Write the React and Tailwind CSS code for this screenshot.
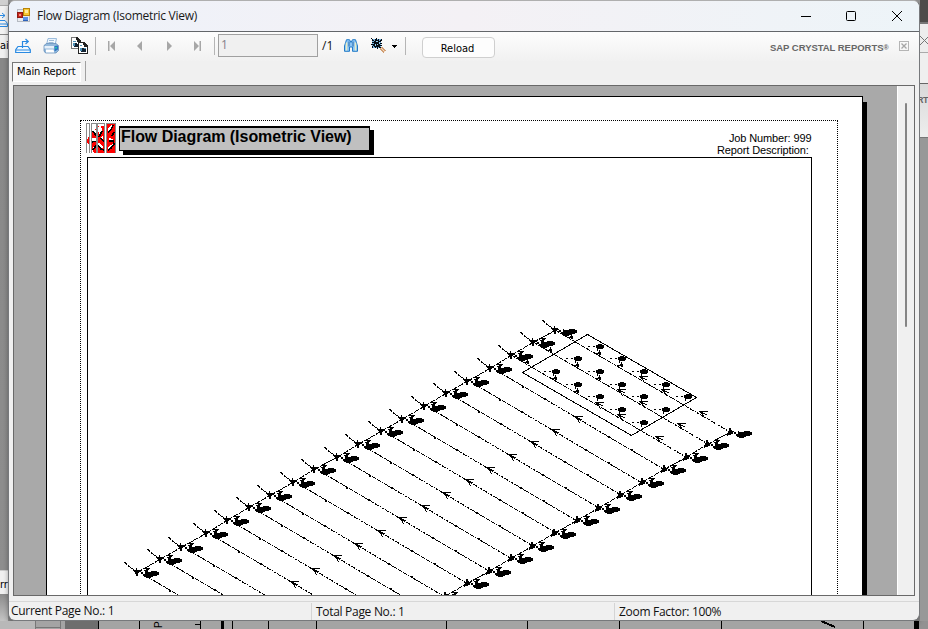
import React from "react";

const upper = [
  [555, 330], [533, 342], [511, 355], [490, 368], [467, 381], [446, 393], [424, 406],
  [402, 419], [381, 431], [358, 444], [337, 457], [314, 469], [293, 482], [270, 495],
  [249, 507], [227, 520], [206, 533], [181, 547], [160, 559], [137, 572],
];
const lower = [
  [730, 432], [707, 444], [686, 457], [664, 469], [642, 482], [620, 495], [598, 508],
  [577, 520], [554, 533], [532, 546], [511, 558], [489, 571], [467, 583], [445, 596],
];
const drops = [
  [571, 338], [599, 354], [621, 366], [550, 351], [577, 366], [599, 379], [527, 363],
  [555, 379], [577, 392],
];
const returns = [
  [640, 377], [662, 390], [700, 412], [618, 390], [640, 402], [678, 424], [596, 403],
  [618, 415], [656, 437],
];
const pods = [
  [600, 347], [578, 359], [622, 359], [556, 372], [600, 372], [644, 372], [578, 385],
  [622, 385], [666, 385], [600, 397], [644, 397], [688, 397], [622, 410], [666, 410],
  [644, 423],
];

function Blob({ x, y }) {
  return (
    <path
      d={`M${x + 9} ${y - 1}h5v-1h6v1h2v3h-2v1h-4v1h-2v1h-5v-1h-2v-1h-1v-2h3z`}
      fill="#000"
      stroke="none"
    />
  );
}

function UpLeftArrow({ x, y }) {
  return (
    <path
      d={`M${x - 1} ${y - 1}h9v1h-5v1h2v1h2v1h-2v-1h-2v1h1v2h1v1h-1v-1h-1v-2h-1v-1h-1v-1h-1v-1h-1z`}
      fill="#000"
      stroke="none"
    />
  );
}

function Node({ p, next, lead, up }) {
  const [x, y] = p;
  return (
    <g>
      {lead && <path d={`M${x - 12} ${y - 8.5}L${x} ${y}`} strokeDasharray="3 1" />}
      {lead && <path d={`M${x - 13} ${y - 10}h2v1h1v1h-2v-1h-1z`} fill="#000" stroke="none" />}
      {up ? (
        <path d={`M${x - 1} ${y - 4}h2v2h1v2h1v2h-2v1h-3v1h-1v-3h1v-2h1z`} fill="#000" stroke="none" />
      ) : (
        <path d={`M${x - 4} ${y - 2}h3v-2h1v2h3v1h-1v2h-1v3h-2v-2h-1v-2h-1v-1h-1z`} fill="#000" stroke="none" />
      )}
      <path d={`M${x + 2} ${y - 0.5}h2m0 1h2m-2 1h2m0 1h3M${x + 8.5} ${y - 1}v3`} />
      {next && (
        <>
          <path d={`M${x} ${y + 0.5}L${next[0]} ${next[1] + 0.5}`} strokeDasharray="6 1" />
          <path d={`M${x + 7} ${y - 4}h6v1h-1v1h-1v2h-1v1h-1v-2h-2v-1h2v-1h-2z`} fill="#000" stroke="none" />
        </>
      )}
      <Blob x={x} y={y + 1} />
    </g>
  );
}

function Diagram() {
  return (
    <svg
      className="block h-full w-full"
      viewBox="88 158 723 437"
      preserveAspectRatio="xMinYMin slice"
      shapeRendering="crispEdges"
      fill="none"
      stroke="#000"
      strokeWidth="1"
    >
      {upper.map(([x, y], i) => {
        const short = i < 3;
        return (
          <g key={i}>
            <path
              d={short ? `M${x} ${y}L${x + 175} ${y + 102}` : `M${x + 9} ${y + 4}L${x + 175} ${y + 102}`}
              strokeDasharray="5 1 1 1 3 1"
            />
            {!short && (
              <>
                <UpLeftArrow x={x + 85} y={y + 49} />
                {[32, 54, 118, 141].map((d) => (
                  <path key={d} d={`M${x + d} ${Math.round(y + d * 0.583)}h2`} strokeWidth="2" />
                ))}
              </>
            )}
          </g>
        );
      })}
      {upper.map((p, i) => (
        <Node key={i} p={p} next={upper[i - 1]} lead />
      ))}
      {lower.map((p, i) => (
        <Node key={i} p={p} next={lower[i - 1]} up />
      ))}
      <path d="M587.5 334.5L696.500 397.5L631.500 435.500L522.5 372.500Z" />
      {drops.map(([x, y], i) => (
        <path
          key={i}
          d={`M${x - 4} ${y - 1}h3v-1h1v-2h1v2h1v3h-2v-1h-4z`}
          fill="#000"
          stroke="none"
        />
      ))}
      {returns.map(([x, y], i) => (
        <UpLeftArrow key={i} x={x} y={y} />
      ))}
      {pods.map(([x, y], i) => (
        <g key={i}>
          <path d={`M${x - 12} ${y - 0.5}h2m3 0h2M${x - 2.5} ${y}v4`} />
          <path
            d={`M${x - 2} ${y - 3}h4v1h2v3h-1v1h-6v-1h-1v-3h2z`}
            fill="#000"
            stroke="none"
          />
        </g>
      ))}
    </svg>
  );
}

function AppIcon() {
  return (
    <svg className="h-4 w-4 shrink-0" viewBox="0 0 16 16" shapeRendering="crispEdges">
      <path d="M1.500 1.500h12v12h-12z" fill="#e9ebef" stroke="#b5bac2" />
      <path d="M1.500 4.500h5v5h-5z" fill="#c8241b" stroke="#8d1a14" />
      <path d="M3 6h2v2H3z" fill="#ef8d80" />
      <path d="M7.500.5h6v7h-6z" fill="#f7c935" stroke="#b98308" />
      <path d="M9 2h3v3H9z" fill="#ffeaa0" />
      <path d="M7 9h5v4H7z" fill="#5b92e8" />
      <path d="M7 12h5v1H7z" fill="#2c62bb" />
    </svg>
  );
}

function ExportIcon() {
  return (
    <svg className="h-4 w-4 shrink-0" viewBox="0 0 16 16" fill="none" stroke="#2a8ae2" strokeWidth="1.2">
      <path d="M3 8.500h10l2.300 3.200v2.800H.700v-2.800z" fill="#f1f9ff" />
      <path d="M1 12h14" />
      <path d="M7.500 10V3.500h5.500M10.500 1l2.800 2.500l-2.800 2.500" />
    </svg>
  );
}

function PrintIcon() {
  return (
    <svg className="h-4 w-4 shrink-0" viewBox="0 0 16 16">
      <path d="M5 .600h8.500L12 7H3.500z" fill="#f4faff" stroke="#7aa5cf" strokeWidth=".8" />
      <path d="M6 2.500h5M5.500 4.500h5" stroke="#86a9ca" strokeWidth=".8" />
      <path d="M1 7.500l2.500-2h9.500l2.500 2v5L13 15H2.500L1 13z" fill="#94b9db" stroke="#5785b4" strokeWidth=".7" />
      <path d="M1.500 8h9.500v2.500H1.500z" fill="#e6f0fa" />
      <path d="M11.500 8l3.500-.5v4l-3.500 2z" fill="#2c75c4" />
      <path d="M3 11.500h7.500l.8 3H3z" fill="#fff" />
      <path d="M12 9h2v1.500h-2z" fill="#28c6a9" />
    </svg>
  );
}

function CopyIcon() {
  return (
    <svg className="h-[17px] w-[17px] shrink-0" viewBox="0 0 17 17" shapeRendering="crispEdges">
      <path d="M.5.5h6l3 3v8h-9z" fill="#fff" stroke="#777" />
      <path d="M5 0h2v1h1v1h1v1h1v2H6V3H5z" fill="#222" />
      <path d="M2 4h3v1H2zM2 6h2v3H2z" fill="#4d91b7" />
      <path d="M4 6h2v1h2v3H3V9h1z" fill="#123" />
      <path d="M7.500 5.500h6l3 3v8h-9z" fill="#fff" stroke="#222" />
      <path d="M12 5h2v1h1v1h1v1h1v2h-4V8h-1z" fill="#222" />
      <path d="M9 8h2v1H9zM9 11h6v3H9z" fill="#4d91b7" />
      <path d="M11 11h2v1h2v3h-5v-1h1z" fill="#123" />
    </svg>
  );
}

function Nav({ d }) {
  return (
    <svg className="h-[10px] w-2 shrink-0" viewBox="0 0 8 10" fill="#a7a7a7">
      <path d={d} />
    </svg>
  );
}

function Binoculars() {
  return (
    <svg className="h-[13px] w-[14px] shrink-0" viewBox="0 0 14 13">
      <path d="M2.500.7h3L7 3.500L8.500.7h3L13.500 7v5.300H8.500V8h-3v4.300H.500V7z" fill="#8ac4f6" stroke="#237cc8" />
      <path d="M2.500 3.500v8M11.500 3.500v8" stroke="#e9edc3" strokeWidth="1.5" />
      <path d="M5 2.500v5M9 2.500v5" stroke="#2469aa" />
    </svg>
  );
}

function ZoomIcon() {
  return (
    <svg className="h-[15px] w-[15px] shrink-0" viewBox="0 0 15 15" shapeRendering="crispEdges">
      <path d="M1 1h9v9H1z" fill="#75b7e4" />
      <path d="M0 0h1v1h1v1h1v1h1V1h1V0h1v2h1V1h1v2h1V2h1V1h1v2h-1v1h-1v1h2v1H9v1h2v1H9v1h1v1H8V9H7v2H6V9H5v1H4V9H3V8H2v2H1V8h1V7H0V6h3V5H1V4h2V3H1V1H0z" fill="#050c15" />
      <path d="M5 3h2v1H5zM4 6h1v2H4zM8 4h1v2H8zM6 6h1v1H6z" fill="#92d1f2" />
      <path d="M10 10l4 4" stroke="#cf9d74" strokeWidth="3" />
      <path d="M10 10l4 4" stroke="#f8d9b8" strokeWidth="1" />
    </svg>
  );
}

function Logo() {
  return (
    <svg className="h-[30px] w-[30px] shrink-0" viewBox="0 0 30 30" shapeRendering="crispEdges">
      <path d="M0 0h30v30H0z" fill="#fff" />
      <path d="M2 14h1v7H2v-1H1v-4h1zM6 8l5-3v25H8l-2-4zM12 3h6v27h-6zM21 1h8v29h-8z" fill="#f00" />
      <path d="M6 6l3-3 1 7 1 4-4-4zM6 15h5v3l-5 1zM7 24l3-3 1 2-3 4zM12 4l3-2 1 6-3 6zM17 12v7l-2-4zM13 19l4 5-2 2-3-4z" fill="#fff" />
      <path d="M22 5l4-3v4l-4 3zM23 15l4 1v3l-4-1zM22 24l5-3v3l-4 3z" fill="#fff" />
      <path d="M7 8l4 6M6 19l5-1M7 27l4-6M13 14l3-6M15 15l3 4M12 22l3 4 3 1M22 9l4-3M27 2l-1 3M23 18h4l1 3-3 4-3 2M28 9l-2 4" fill="none" stroke="#000" strokeWidth="1.500" />
      <path d="M.5 30V.5h3V30M5.500 30V.5h5V30M11.500 30V.5h7V30M20.500 30V.5h9V30" fill="none" stroke="#8a8a8a" />
      <path d="M4 0h1v30H4zM19 0h1v30h-1z" fill="#fff" />
    </svg>
  );
}

function Divider() {
  return <div className="h-[18px] w-px shrink-0 bg-[#b5b5b5]" />;
}

function TitleBar() {
  return (
    <header className="flex h-[31px] shrink-0 items-center border-b border-[#63666a] bg-gradient-to-r from-[#edf2fa] via-[#f4f1f5] to-[#edf4f8] pl-[7px]">
      <AppIcon />
      <h1 className="ml-[5px] w-[180px] whitespace-nowrap font-['Open_Sans',sans-serif] text-[12px] tracking-[-0.280px] text-[#191919]">
        Flow Diagram (Isometric View)
      </h1>
      <svg className="ml-auto mr-[15px] h-3 w-[104px] shrink-0" viewBox="0 0 104 12" fill="none" stroke="#000">
        <path d="M1 6.500h10" />
        <rect x="46.500" y="1.500" width="9" height="9" rx="1" />
        <path d="M92 1l10 10M102 1l-10 10" />
      </svg>
    </header>
  );
}

function Toolbar() {
  return (
    <div className="flex h-[29px] shrink-0 items-center bg-gradient-to-b from-[#fdfdfd] to-[#f1f1f1] pb-[2px] pl-[6px] font-['DejaVu_Sans_Condensed','DejaVu_Sans',sans-serif] text-[11px]">
      <ExportIcon />
      <div className="ml-3"><PrintIcon /></div>
      <div className="ml-3"><CopyIcon /></div>
      <div className="ml-[7px]"><Divider /></div>
      <div className="ml-[12px]"><Nav d="M0 0h1.500v10H0zM7 0v10L2 5z" /></div>
      <div className="ml-[20px]"><Nav d="M6 0v10L1 5z" /></div>
      <div className="ml-[21px]"><Nav d="M2 0v10l5-5z" /></div>
      <div className="ml-[21px]"><Nav d="M0 0v10l5-5zM5.500 0h1.500v10H5.500z" /></div>
      <div className="ml-[12px]"><Divider /></div>
      <div className="ml-[3px] h-[23px] w-[100px] shrink-0 border border-[#a0a0a0] bg-[#f0f0f0] pl-[2px] font-['Open_Sans',sans-serif] text-[12px] leading-[20px] text-[#85808b]">1</div>
      <span className="ml-[4px] w-[22px] shrink-0 pt-px font-['Open_Sans',sans-serif] text-[12px] text-[#111]">/1</span>
      <Binoculars />
      <div className="ml-[13px]"><ZoomIcon /></div>
      <svg className="ml-[6px] mt-[2px] h-[3px] w-[5px] shrink-0" viewBox="0 0 5 3" shapeRendering="crispEdges"><path d="M0 0h5L2.500 3z" /></svg>
      <div className="ml-[8px]"><Divider /></div>
      <button className="ml-[16px] mt-[4px] h-[21px] w-[73px] shrink-0 rounded-[4px] border border-[#cfcfcf] bg-[#fdfdfd] pr-[2px] pt-[2px] text-[11px] leading-none text-black">Reload</button>
      <span className="ml-auto w-[118px] shrink-0 whitespace-nowrap pt-[5px] font-['Liberation_Sans',Arial,sans-serif] text-[9.500px] font-bold tracking-[-0.040px] text-[#666]">
        SAP CRYSTAL REPORTS<span className="text-[7px] align-[1px]">®</span>
      </span>
      <svg className="ml-[11px] mr-[10px] h-[10px] w-[10px] shrink-0" viewBox="0 0 10 10" fill="none" stroke="#b5b5b5">
        <rect x=".5" y=".5" width="9" height="9" />
        <path d="M2.500 2.500l5 5M7.500 2.500l-5 5" stroke="#a5a5a5" strokeWidth="1.300" />
      </svg>
    </div>
  );
}

function Viewer() {
  return (
    <main className="mx-1 flex h-[511px] shrink-0 overflow-hidden border border-[#696969] bg-[#a9a9a9]">
      <div className="flex w-[883px] shrink-0 pl-8 pt-[10px]">
        <section className="h-[520px] w-[817px] shrink-0 border border-black bg-white pl-[33px] pt-[23px]">
          <div className="h-[520px] w-[758px] border border-dotted border-black pl-[6px] pt-[2px]">
            <div className="flex h-[34px] w-[725px] items-start">
              <div className="-ml-px"><Logo /></div>
              <h2 className="ml-[3px] mt-[3px] h-[25px] w-[251px] whitespace-nowrap border border-t-2 border-black bg-[#c0c0c0] pl-px font-['Liberation_Sans',Arial,sans-serif] text-[16px] font-bold leading-[18px] tracking-[-0.040px] shadow-[4px_4px_0_#000]">
                Flow Diagram (Isometric View)
              </h2>
              <div className="ml-auto w-[95px] whitespace-nowrap pt-[9px] font-['Liberation_Sans',Arial,sans-serif] text-[11px] leading-[12px] tracking-[-0.130px] text-black">
                <p className="pl-[12px]">Job Number: 999</p>
                <p>Report Description:</p>
              </div>
            </div>
            <div className="h-[520px] w-[725px] border border-black">
              <div className="h-[437px] w-[723px] overflow-hidden">
                <Diagram />
              </div>
            </div>
          </div>
        </section>
        <div className="mt-[6px] h-[520px] w-1 shrink-0 bg-black" />
      </div>
      <div className="flex grow justify-center border-l border-white bg-[#f0f0f0] pt-[17px]">
        <div className="h-[224px] w-[2px] rounded bg-[#858585]" />
      </div>
    </main>
  );
}

function StatusBar() {
  return (
    <footer className="mt-[5px] flex h-[19px] shrink-0 items-center whitespace-nowrap border-t border-[#d7d7d7] font-['Open_Sans',sans-serif] text-[12px] tracking-[-0.300px] text-[#111]">
      <span className="w-[302px] pl-[2px]">Current Page No.: 1</span>
      <span className="h-[17px] w-[303px] border-l border-[#d4d4d4] pl-1 leading-[17px]">Total Page No.: 1</span>
      <span className="h-[17px] border-l border-[#d4d4d4] pl-1 leading-[17px]">Zoom Factor: 100%</span>
    </footer>
  );
}

export default function App() {
  return (
    <div className="h-[629px] w-[928px] overflow-hidden bg-[#929292]">
      <div className="flex h-[621px]">
        <aside className="flex w-2 shrink-0 flex-col overflow-hidden font-['DejaVu_Sans_Condensed',sans-serif] text-[11px]">
          <div className="h-[5px] bg-[#d0d0d0]" />
          <div className="h-[29px] border-t border-[#aaa] bg-[#f2f2f2] pt-[6px]">
            <svg className="h-4 w-2" viewBox="8 0 8 16" fill="none" stroke="#2a8ae2">
              <path d="M8 3.500h5M10 1l3 2.500L10 6M8 8.500h5l2.500 3v3H8M8 12h7" />
            </svg>
          </div>
          <div className="h-[25px] border-y border-[#888] bg-[#f0f0f0] pt-[3px] leading-4">ai</div>
          <div className="h-[511px] bg-gradient-to-b from-[#888] to-[#8e8e8e]" />
          <div className="h-[24px] border-t border-[#ccc] bg-[#f0f0f0] pt-[6px] leading-4">rr</div>
          <div className="grow bg-gradient-to-b from-[#8b8b8b] to-[#c4c4c4]" />
        </aside>
        <div className="flex w-[912px] shrink-0 flex-col overflow-hidden rounded-[7px] border border-[#77797c] border-t-[#afafaf] bg-[#f0f0f0] shadow-[0_3px_5px_#0005]">
          <TitleBar />
          <Toolbar />
          <div className="flex h-6 shrink-0 items-start pl-[3px]">
            <div className="mt-px h-[20px] w-[69px] whitespace-nowrap border border-b-white border-l-[#777] border-r-white border-t-[#777] bg-[#f8f8f8] pl-[4px] font-['DejaVu_Sans_Condensed','DejaVu_Sans',sans-serif] text-[11px] leading-[18px] tracking-[-0.100px] text-black">Main Report</div>
            <div className="ml-1 h-5 w-px bg-[#a0a0a0]" />
          </div>
          <Viewer />
          <StatusBar />
        </div>
        <aside className="flex w-2 shrink-0 flex-col overflow-hidden text-[9px] text-[#666]">
          <div className="h-[22px] bg-[#4d4c4a]" />
          <div className="h-[31px] border-b border-t-2 border-b-[#aaa] border-t-[#777] bg-[#ededed] pt-[12px]">
            <svg className="h-[10px] w-2" viewBox="0 0 8 10" fill="none" stroke="#777">
              <path d="M0 0l9 9M0 9l9-9" />
            </svg>
          </div>
          <div className="h-[31px] border-b border-[#666] bg-[#efefef]" />
          <div className="flex h-[54px] justify-end border-b border-[#777] bg-gradient-to-b from-[#d9d9d9] to-[#eee] pt-[10px] font-['Liberation_Sans',Arial,sans-serif] text-[9px] font-bold leading-3 tracking-[-0.5px]"><span>RT</span></div>
          <div className="grow bg-[#989898]" />
        </aside>
      </div>
      <svg className="block h-2 w-[928px]" viewBox="0 621 928 8" shapeRendering="crispEdges">
        <path d="M0 621h35v8H0z" fill="#b8b8b8" />
        <path d="M35 621h30v8H35z" fill="#a4a4a4" />
        <path d="M65 621h33v8H65z" fill="#6e6e6e" />
        <path d="M98 621h816v8H98z" fill="#a4a4a4" />
        <path d="M35 621v8M60 621v8M35 627h25" stroke="#777" fill="none" />
        <path d="M98.500 621v8M139.500 621v8M200.500 621v8M232.500 621v8M268.500 621v8M316.500 621v8M446.500 621v8M527.500 621v8M619.500 621v8M721.500 621v8M863.500 621v8" stroke="#000" />
        <path d="M221 621h3v8h-3zM914 621h5v8h-5z" />
        <path d="M821 621l14 6" stroke="#000" strokeWidth="2" />
        <text transform="translate(162 628) rotate(-90)" fontFamily="Liberation Sans" fontSize="10">P</text>
        <path d="M195 624.500h5" stroke="#000" />
      </svg>
    </div>
  );
}
